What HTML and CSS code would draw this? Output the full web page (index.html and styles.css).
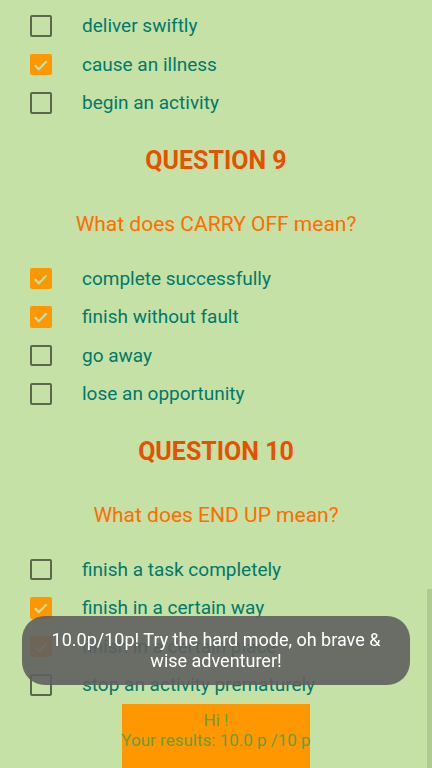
FILE: index.html
```html
<!DOCTYPE html>
<html>
<head>
<meta charset="utf-8">
<link rel="stylesheet" href="styles.css">
</head>
<body>
<div class="page">
  <div class="options first">
    <div class="row"><span class="box"></span><span class="label">deliver swiftly</span></div>
    <div class="row"><span class="box checked"><svg viewBox="0 0 22 22"><polyline points="5,11.5 9,15.5 17,7.5"/></svg></span><span class="label">cause an illness</span></div>
    <div class="row"><span class="box"></span><span class="label">begin an activity</span></div>
  </div>

  <h2 class="title">QUESTION 9</h2>
  <p class="question">What does CARRY OFF mean?</p>
  <div class="options">
    <div class="row"><span class="box checked"><svg viewBox="0 0 22 22"><polyline points="5,11.5 9,15.5 17,7.5"/></svg></span><span class="label">complete successfully</span></div>
    <div class="row"><span class="box checked"><svg viewBox="0 0 22 22"><polyline points="5,11.5 9,15.5 17,7.5"/></svg></span><span class="label">finish without fault</span></div>
    <div class="row"><span class="box"></span><span class="label">go away</span></div>
    <div class="row"><span class="box"></span><span class="label">lose an opportunity</span></div>
  </div>

  <h2 class="title">QUESTION 10</h2>
  <p class="question">What does END UP mean?</p>
  <div class="options">
    <div class="row"><span class="box"></span><span class="label">finish a task completely</span></div>
    <div class="row"><span class="box checked"><svg viewBox="0 0 22 22"><polyline points="5,11.5 9,15.5 17,7.5"/></svg></span><span class="label">finish in a certain way</span></div>
    <div class="row"><span class="box checked"><svg viewBox="0 0 22 22"><polyline points="5,11.5 9,15.5 17,7.5"/></svg></span><span class="label">finish in a certain place</span></div>
    <div class="row"><span class="box"></span><span class="label">stop an activity prematurely</span></div>
  </div>

  <div class="result">
    <div class="result-line">Hi !</div>
    <div class="result-line">Your results: 10.0 p /10 p</div>
  </div>
</div>

<div class="toast">10.0p/10p! Try the hard mode, oh brave &amp; wise adventurer!</div>
<div class="scrollbar"></div>
</body>
</html>
```

FILE: styles.css
```css
html, body {
  margin: 0;
  padding: 0;
  height: 768px;
  overflow: hidden;
  background: #c5e1a5;
  font-family: Roboto, "Noto Sans", sans-serif;
}

.page {
  display: flex;
  flex-direction: column;
  padding-top: 6.75px;
}

.options {
  display: flex;
  flex-direction: column;
  margin-top: 21px;
}

.options.first {
  margin-top: 0;
}

.row {
  display: flex;
  align-items: center;
  height: 38.5px;
}

.box {
  box-sizing: border-box;
  width: 21.5px;
  height: 21.5px;
  margin-left: 30px;
  margin-right: 30.5px;
  border: 2.5px solid #5b684c;
  border-radius: 2px;
  display: flex;
  align-items: center;
  justify-content: center;
  flex-shrink: 0;
}

.box.checked {
  background: #ff9800;
  border-color: #ff9800;
}

.box svg {
  width: 21.5px;
  height: 21.5px;
  flex-shrink: 0;
}

.box svg polyline {
  fill: none;
  stroke: #c5e1a5;
  stroke-width: 2.2;
}

.label {
  color: #00796b;
  font-size: 19px;
  line-height: 24px;
  white-space: nowrap;
}

.title {
  margin: 23px 0 0;
  text-align: center;
  color: #e65100;
  font-size: 25px;
  line-height: 32px;
  font-weight: 700;
}

.question {
  margin: 33px 0 0;
  text-align: center;
  color: #ff6d00;
  font-size: 21px;
  line-height: 28px;
}

.result {
  align-self: center;
  width: 188px;
  height: 100px;
  background: #ff9800;
  padding-top: 6px;
  box-sizing: border-box;
  display: flex;
  flex-direction: column;
  align-items: center;
}

.result-line {
  color: #689f38;
  font-size: 17px;
  line-height: 20px;
  white-space: nowrap;
}

.toast {
  position: fixed;
  left: 22px;
  top: 616px;
  width: 388px;
  height: 69px;
  box-sizing: border-box;
  padding: 14px 24px;
  border-radius: 23px;
  background: rgba(95, 95, 95, 0.9);
  color: #ffffff;
  font-size: 18px;
  line-height: 20.5px;
  text-align: center;
}

.scrollbar {
  position: fixed;
  right: 0;
  top: 589px;
  bottom: 0;
  width: 5px;
  background: rgba(0, 0, 0, 0.1);
}
```
